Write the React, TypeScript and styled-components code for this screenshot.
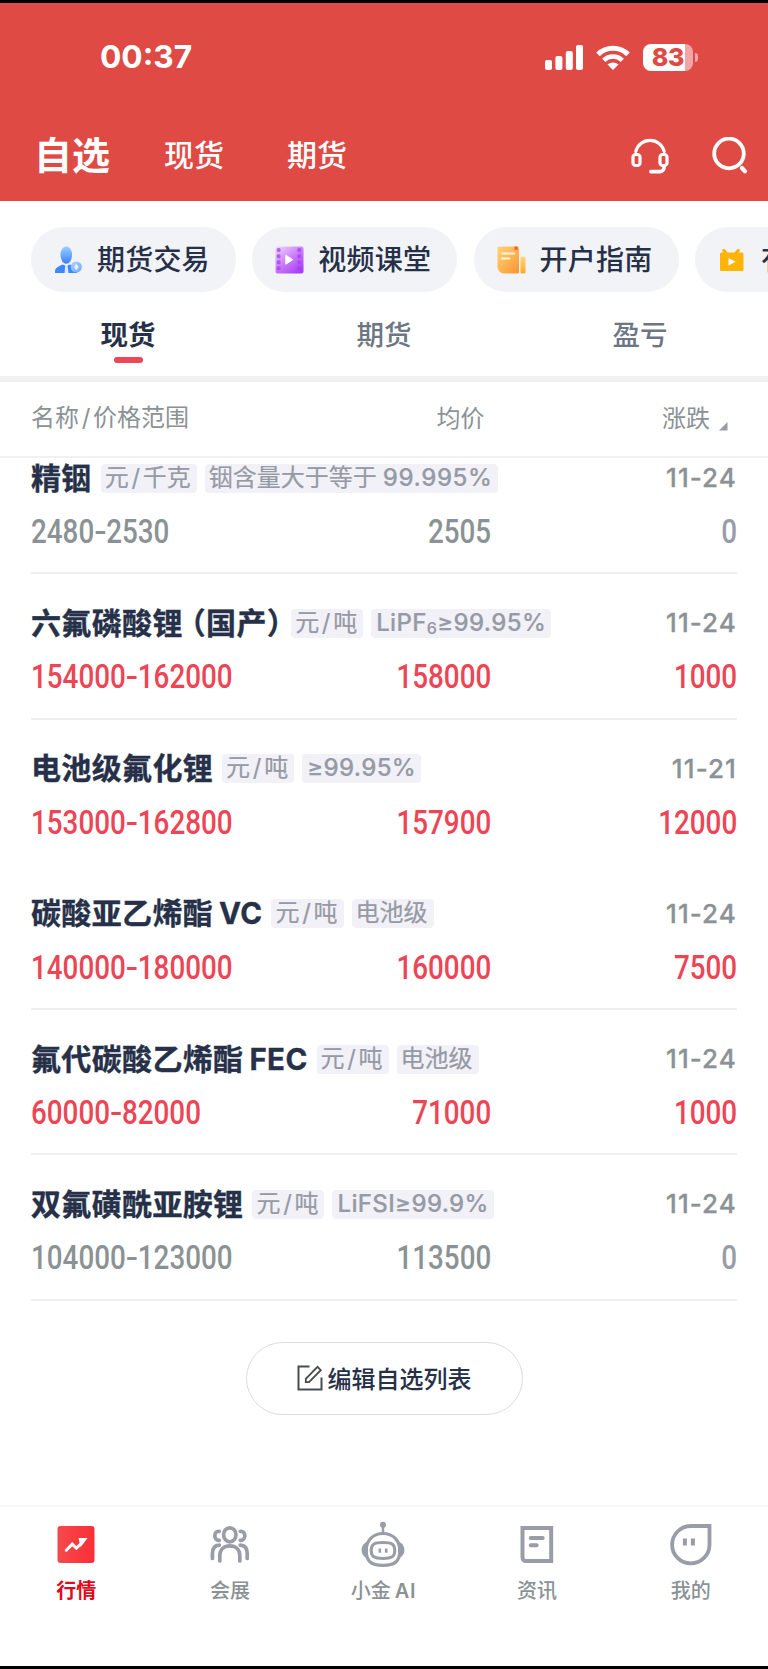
import React from "react";
import styled, { createGlobalStyle } from "styled-components";

const sans = `Inter, "Noto Sans CJK SC", sans-serif`;
const cjk = `"Noto Sans CJK SC", Inter, sans-serif`;

const GlobalStyle = createGlobalStyle`
  * { box-sizing: border-box; }
  html, body { margin: 0; padding: 0; }
  body { background: #fff; font-family: ${cjk}; overflow: hidden; }
  svg { display: block; flex: none; }
`;

const Screen = styled.div`
  width: 768px;
  height: 1669px;
  display: flex;
  flex-direction: column;
  overflow: hidden;
  background: #fff;
  border-top: 3px solid #000;
  border-bottom: 3px solid #000;
`;

const Hero = styled.header`
  height: 198px;
  flex: none;
  background: #df4a44;
  color: #fff;
`;

const StatusBar = styled.div`
  height: 108px;
  padding: 0 70px 0 100px;
  display: flex;
  align-items: center;
  justify-content: space-between;
`;

const Clock = styled.div`
  font: 700 31.7px/40px ${sans};
`;

const StatusIcons = styled.div`
  display: flex;
  align-items: center;
  gap: 13px;
`;

const Battery = styled.div`
  display: flex;
  align-items: center;
  gap: 2px;
`;

const BatteryBody = styled.div`
  width: 50px;
  height: 27px;
  border-radius: 8px;
  background: linear-gradient(90deg, #fff 0 83%, #f1a5a4 83%);
  color: #df4a44;
  font: 800 25px/27px ${sans};
  text-align: center;
  letter-spacing: -0.3px;
`;

const BatteryCap = styled.div`
  width: 3px;
  height: 9px;
  border-radius: 0 4px 4px 0;
  background: #f1a5a4;
`;

const TitleBar = styled.div`
  height: 90px;
  display: flex;
  align-items: center;
  padding: 0 20px 6px 34px;
`;

const TitleTab = styled.span<{ $active?: boolean }>`
  font-size: ${(p) => (p.$active ? 38 : 30)}px;
  font-weight: ${(p) => (p.$active ? 700 : 500)};
  line-height: 50px;
  margin-right: ${(p) => (p.$active ? 54 : 63)}px;
`;

const TitleActions = styled.div`
  margin-left: auto;
  padding-top: 4px;
  display: flex;
  gap: 43px;
`;

const ChipRow = styled.div`
  flex: none;
  display: flex;
  gap: 16.3px;
  padding: 26px 0 0 31px;
  height: 91px;
  width: 1000px;
`;

const Chip = styled.div`
  width: 205px;
  height: 65px;
  flex: none;
  display: flex;
  align-items: center;
  gap: 14px;
  padding-left: 22px;
  border-radius: 33px;
  background: #f2f3f7;
  color: #263149;
  font-weight: 500;
  font-size: 28px;
  line-height: 40px;
  letter-spacing: 0.2px;
  white-space: nowrap;
`;

const ChipLabel = styled.span`
  padding-bottom: 3px;
`;

const Tabs = styled.nav`
  flex: none;
  height: 90px;
  border-bottom: 6px solid #f1f1f1;
  display: grid;
  grid-template-columns: repeat(3, 1fr);
`;

const Tab = styled.div<{ $active?: boolean }>`
  display: flex;
  flex-direction: column;
  align-items: center;
  padding-top: 21px;
  font-size: 27.5px;
  line-height: 40px;
  font-weight: ${(p) => (p.$active ? 700 : 500)};
  color: ${(p) => (p.$active ? "#263149" : "#6e7683")};
  &::after {
    content: "";
    width: 29px;
    height: 6px;
    margin-top: 4px;
    border-radius: 3px;
    background: ${(p) => (p.$active ? "#ee4558" : "transparent")};
  }
`;

const ColumnHeads = styled.div`
  flex: none;
  height: 76px;
  border-bottom: 2px solid #f1f1f1;
  padding: 0 40px 5px 31px;
  display: grid;
  grid-template-columns: 405.5px 120px 1fr;
  align-items: center;
  color: #8b9295;
  font-size: 24px;
  line-height: 34px;
`;

const HeadCell = styled.div<{ $end?: boolean }>`
  display: flex;
  justify-content: ${(p) => (p.$end ? "flex-end" : "flex-start")};
  align-items: flex-end;
  gap: 9px;
`;

const SortMark = styled.svg`
  margin-bottom: 3px;
`;

const SlashMark = styled.span`
  margin: 0 2.7px;
  font-family: Inter, sans-serif;
`;

const List = styled.main`
  flex: none;
  padding: 0 31px;
`;

const Item = styled.section<{ $line: boolean; $first?: boolean }>`
  height: ${(p) => (p.$first ? 116.3 : 145.3)}px;
  padding-top: ${(p) => (p.$first ? 1 : 30)}px;
  border-bottom: 2px solid ${(p) => (p.$line ? "#f0f0f2" : "transparent")};
`;

const ItemTop = styled.div`
  display: flex;
  align-items: center;
  height: 38px;
  white-space: nowrap;
`;

const Name = styled.h3`
  margin: 0 9px 0 0;
  padding-bottom: 5px;
  font: 700 30px/38px ${cjk};
  letter-spacing: 0.35px;
  -webkit-text-stroke: 0.35px #263149;
  color: #263149;
`;

const NameLatin = styled.span`
  font-family: Inter, sans-serif;
  font-size: 29.5px;
  line-height: 0;
  margin-left: 6px;
`;

const OpenParen = styled.span`
  margin-left: 8px;
  font-feature-settings: "halt" 1;
`;

const CloseParen = styled.span`
  font-feature-settings: "halt" 1;
`;

const Tag = styled.span`
  height: 29px;
  padding: 0 5px;
  margin-right: 8px;
  border-radius: 4px;
  background: #f2f1f8;
  color: #969aa5;
  font: 500 24px/28px ${sans};
  letter-spacing: 0.35px;
  -webkit-text-stroke: 0.2px #969aa5;
`;

const CjkText = styled.span`
  font-weight: 400;
  font-size: 24px;
  letter-spacing: 0;
  position: relative;
  left: -1px;
`;

const NarrowGap = styled.span`
  margin-left: 5px;
  letter-spacing: 0.6px;
`;

const Sub = styled.span`
  display: inline-block;
  font-size: 16px;
  line-height: 16px;
  transform: translateY(3px);
`;

const ItemDate = styled.time`
  margin-left: auto;
  font: 500 26px/38px ${sans};
  letter-spacing: 1.1px;
  -webkit-text-stroke: 0.3px #8b9295;
  color: #8b9295;
`;

const Figures = styled.div<{ $up: boolean }>`
  display: grid;
  grid-template-columns: 229px 231px 1fr;
  margin-top: 16px;
  font: 500 33.5px/38px Roboto, sans-serif;
  white-space: nowrap;
  color: ${(p) => (p.$up ? "#ec4555" : "#8b9295")};
`;

const Figure = styled.span<{ $end?: boolean; $muted?: boolean }>`
  justify-self: ${(p) => (p.$end ? "end" : "start")};
  transform: scaleX(0.83);
  transform-origin: ${(p) => (p.$end ? "right" : "left")} center;
  color: ${(p) => (p.$muted ? "#989ca8" : "inherit")};
`;

const Dash = styled.span`
  display: inline-block;
  margin: 0 1.5px;
  transform: scaleX(1.3);
`;

const EditButton = styled.button`
  flex: none;
  align-self: center;
  width: 277px;
  height: 73px;
  margin: 41px 0 0;
  padding: 0 0 1px;
  border: 1.5px solid #dcdcde;
  border-radius: 37px;
  background: #fff;
  color: #263149;
  font: 500 24px/34px ${cjk};
  display: flex;
  align-items: center;
  justify-content: center;
  gap: 5px;
`;

const BottomNav = styled.nav`
  margin-top: auto;
  height: 161px;
  flex: none;
  border-top: 2px solid #f7f7f8;
  display: grid;
  grid-template-columns: repeat(5, 1fr);
`;

const NavItem = styled.div<{ $active?: boolean }>`
  display: flex;
  flex-direction: column;
  align-items: center;
  padding: 13px 1px 0 0;
  color: ${(p) => (p.$active ? "#df0a20" : "#8b9295")};
  font-size: 20px;
  font-weight: ${(p) => (p.$active ? 700 : 500)};
  line-height: 30px;
  gap: 5px;
  white-space: nowrap;
`;

const NavLatin = styled.span`
  font-family: Inter, sans-serif;
  font-weight: 600;
  letter-spacing: 0.8px;
  line-height: 0;
  margin-left: 4px;
`;

const SignalIcon = () => (
  <svg width="38" height="25" viewBox="0 0 38 25" fill="#fff">
    <rect x="0" y="15" width="7" height="10" rx="2" />
    <rect x="10.4" y="11" width="7" height="14" rx="2" />
    <rect x="20.8" y="6" width="7" height="19" rx="2" />
    <rect x="31" y="0" width="7" height="25" rx="2" />
  </svg>
);

const WifiIcon = () => (
  <svg width="34" height="25" viewBox="0 0 34 25" fill="none" stroke="#fff" strokeWidth="5">
    <path d="M2 9.4a21.5 21.5 0 0 1 30 0" />
    <path d="M7.7 15.3a13.4 13.4 0 0 1 18.6 0" strokeWidth="4.6" />
    <path d="M11.5 19.6a8 8 0 0 1 11 0L17 25z" fill="#fff" stroke="none" />
  </svg>
);

const HeadsetIcon = () => (
  <svg width="38" height="37" viewBox="0 0 38 37" fill="none" stroke="#fff" strokeWidth="3.2" strokeLinecap="round" strokeLinejoin="round">
    <path d="M4.8 14.5a14.6 14.6 0 0 1 28.4 0" />
    <rect x="2" y="17.5" width="7" height="11" rx="2.6" />
    <rect x="29" y="17.5" width="7" height="11" rx="2.6" />
    <path d="M33 29v1.8a4 4 0 0 1-4 3.8h-9.2" strokeWidth="3.6" />
  </svg>
);

const SearchIcon = () => (
  <svg width="36" height="37" viewBox="0 0 36 37" fill="none" stroke="#fff" strokeLinecap="round">
    <circle cx="17" cy="16.5" r="14.8" strokeWidth="3.8" />
    <path d="M30 31l3 3.3" strokeWidth="4.2" />
  </svg>
);

const TraderIcon = () => (
  <svg width="30" height="30" viewBox="0 0 30 30">
    <defs>
      <linearGradient id="trader" x1="0" y1="0" x2="0" y2="1">
        <stop offset="0" stopColor="#9bd2ff" />
        <stop offset="1" stopColor="#3a80fb" />
      </linearGradient>
      <linearGradient id="coin" x1="0" y1="0" x2="1" y2="1">
        <stop offset="0" stopColor="#a9d3fd" />
        <stop offset="1" stopColor="#6ba7fa" />
      </linearGradient>
    </defs>
    <ellipse cx="13.3" cy="10" rx="5.8" ry="8.7" fill="url(#trader)" />
    <path d="M2 28v-1.5c0-3.500 3-5 7.500-7l3.800 1.500 3.700-1.500C21 21.500 24 23 24 26.500V28z" fill="#3f86fb" />
    <path d="M12.3 20h2.200l1 8h-4z" fill="#d7e8ff" />
    <circle cx="23.3" cy="22" r="5.6" fill="url(#coin)" opacity=".95" />
    <path d="M23.3 18.500l2.400 3.500-2.400 3.500-2.400-3.500z" fill="#dff0ff" />
  </svg>
);

const FilmIcon = () => (
  <svg width="30" height="30" viewBox="0 0 30 30">
    <defs>
      <linearGradient id="film" x1="0" y1="0" x2=".8" y2="1">
        <stop offset="0" stopColor="#f0dcff" />
        <stop offset=".5" stopColor="#cd80fa" />
        <stop offset="1" stopColor="#a83ef7" />
      </linearGradient>
    </defs>
    <rect x="1.5" y="1.5" width="28" height="27" rx="2" fill="url(#film)" />
    <g fill="#a441ee" opacity=".75">
      {[3, 9.2, 15.2, 21.2].map((y) => (
        <React.Fragment key={y}>
          <rect x="2.8" y={y} width="3.8" height="4" rx="1.5" />
          <rect x="23.3" y={y} width="3.8" height="4" rx="1.5" />
        </React.Fragment>
      ))}
    </g>
    <path d="M11.8 10.2v9l7-4.500z" fill="#fff" stroke="#fff" strokeLinejoin="round" />
  </svg>
);

const GuideIcon = () => (
  <svg width="30" height="30" viewBox="0 0 30 30">
    <defs>
      <linearGradient id="guide" x1="0" y1="0" x2="1" y2="1">
        <stop offset="0" stopColor="#ffd476" />
        <stop offset="1" stopColor="#fb9430" />
      </linearGradient>
      <linearGradient id="guideSide" x1="0" y1="0" x2="0" y2="1">
        <stop offset="0" stopColor="#ffd780" />
        <stop offset="1" stopColor="#ffa81f" />
      </linearGradient>
    </defs>
    <path d="M3 1.500h18.500a1.500 1.500 0 0 1 1.500 1.500v24a1.500 1.500 0 0 1-1.500 1.500H8a6.500 6.500 0 0 1-6.500-6.500V3A1.500 1.500 0 0 1 3 1.500z" fill="url(#guide)" />
    <path d="M18.5 1.500h3v4l-1.500-1-1.500 1z" fill="#f3622c" />
    <rect x="24.5" y="11.5" width="5" height="17" rx="1.5" fill="url(#guideSide)" />
    <path d="M6.2 8.500h12M6.200 13.500h7" stroke="#fff5dc" strokeWidth="2.2" strokeLinecap="round" />
  </svg>
);

const TvIcon = () => (
  <svg width="30" height="30" viewBox="0 0 30 30">
    <path d="M9.5 9L6.800 5.500M18.500 9l2.700-3.500" stroke="#ffb100" strokeWidth="3.2" strokeLinecap="round" />
    <rect x="3" y="7.5" width="23.5" height="18.5" rx="1.5" fill="#ffb409" />
    <path d="M11.5 13v7.500l7-3.800z" fill="#fff" />
  </svg>
);

const EditIcon = () => (
  <svg width="26" height="26" viewBox="0 0 26 26" fill="none" stroke="#4a4c55" strokeWidth="2">
    <path d="M12.5 1.500H1.500v23h23V12.500" />
    <path d="M8.8 13.800L20.500 1.900l3.300 3.300L12 17.100H8.800z" stroke="#444b48" strokeWidth="1.8" />
  </svg>
);

const MarketIcon = () => (
  <svg width="46" height="50" viewBox="0 0 46 50">
    <defs>
      <linearGradient id="market" x1="0" y1="0" x2="1" y2="0">
        <stop offset="0" stopColor="#f5494c" />
        <stop offset="1" stopColor="#fa2f37" />
      </linearGradient>
    </defs>
    <rect x="4.5" y="6" width="37" height="37" rx="3" fill="url(#market)" />
    <path d="M13.3 30.200l5.900-6 4.200 4 6-6" fill="none" stroke="#fff" strokeWidth="3" strokeLinecap="round" />
    <path d="M25.5 18h9.100l-7 9z" fill="#fff" />
  </svg>
);

const PeopleIcon = () => (
  <svg width="46" height="50" viewBox="0 0 46 50" fill="none" stroke="#999da8" strokeWidth="3.7" strokeLinecap="round">
    <ellipse cx="22.8" cy="14.8" rx="6.2" ry="7" />
    <path d="M12.8 41V35.500c0-5.800 4-9.700 10-9.700s10 3.900 10 9.700V41" />
    <path d="M12.3 11.300c-6-.8-6 9.700 0 9M33.300 11.300c6-.8 6 9.700 0 9" />
    <path d="M5.4 38.500v-5c0-4.800 1.900-8 7-8.300M40.200 38.500v-5c0-4.800-1.900-8-7-8.300" />
  </svg>
);

const RobotIcon = () => (
  <svg width="46" height="50" viewBox="0 0 46 50" fill="none" stroke="#999da8">
    <circle cx="23" cy="4.8" r="3" fill="#999da8" stroke="none" />
    <path d="M23 6v8" strokeWidth="2.5" />
    <path d="M8 21.500c-8.500 2-8.500 15 0 17zM38 21.500c8.500 2 8.500 15 0 17z" fill="#999da8" stroke="none" />
    <path d="M23 13.500C12 13.500 6.200 21.500 6.200 30c0 11.500 4.800 15.300 16.800 15.300S39.800 41.500 39.800 30C39.800 21.500 34 13.500 23 13.500z" strokeWidth="3.2" />
    <path d="M23 22.500c-9.300 0-11.800 1.800-11.800 8s3 8 11.800 8 11.800-1.800 11.800-8-2.500-8-11.800-8z" strokeWidth="3" />
    <path d="M19.8 28.500v4.200M26.200 28.500v4.200" strokeWidth="2.6" />
  </svg>
);

const NewsIcon = () => (
  <svg width="46" height="50" viewBox="0 0 46 50" fill="none" stroke="#999da8" strokeWidth="4">
    <path d="M8.5 8h28.700v33H12a3.500 3.500 0 0 1-3.500-3.500z" />
    <path d="M16.7 18h12M16.700 25.300h6" strokeLinecap="round" />
  </svg>
);

const ProfileIcon = () => (
  <svg width="46" height="50" viewBox="0 0 46 50" fill="none" stroke="#999da8" strokeWidth="3.8">
    <path d="M41.5 6H22.800a18.700 18.700 0 1 0 18.700 18.700z" />
    <path d="M16.9 18.500v7M24.900 18.500v7" strokeWidth="4" />
  </svg>
);

const chips = [
  { label: "期货交易", Icon: TraderIcon },
  { label: "视频课堂", Icon: FilmIcon },
  { label: "开户指南", Icon: GuideIcon },
  { label: "有色", Icon: TvIcon },
];

const perTon = (
  <CjkText>
    元<SlashMark>/</SlashMark>吨
  </CjkText>
);

interface Quote {
  id: string;
  name: React.ReactNode;
  latin?: string;
  tags: React.ReactNode[];
  date: string;
  range: [string, string];
  average: string;
  change: string;
  line: boolean;
}

const quotes: Quote[] = [
  {
    id: "indium",
    name: "精铟",
    tags: [
      <CjkText>
        元<SlashMark>/</SlashMark>千克
      </CjkText>,
      <>
        <CjkText>铟含量大于等于</CjkText>
        <NarrowGap>99.995%</NarrowGap>
      </>,
    ],
    date: "11-24",
    range: ["2480", "2530"],
    average: "2505",
    change: "0",
    line: true,
  },
  {
    id: "lipf6",
    name: (
      <>
        六氟磷酸锂<OpenParen>（</OpenParen>国产<CloseParen>）</CloseParen>
      </>
    ),
    tags: [
      perTon,
      <>
        LiPF<Sub>6</Sub>≥99.95%
      </>,
    ],
    date: "11-24",
    range: ["154000", "162000"],
    average: "158000",
    change: "1000",
    line: true,
  },
  { id: "lif", name: "电池级氟化锂", tags: [perTon, "≥99.95%"], date: "11-21", range: ["153000", "162800"], average: "157900", change: "12000", line: false },
  { id: "vc", name: "碳酸亚乙烯酯", latin: "VC", tags: [perTon, <CjkText>电池级</CjkText>], date: "11-24", range: ["140000", "180000"], average: "160000", change: "7500", line: true },
  { id: "fec", name: "氟代碳酸乙烯酯", latin: "FEC", tags: [perTon, <CjkText>电池级</CjkText>], date: "11-24", range: ["60000", "82000"], average: "71000", change: "1000", line: true },
  { id: "lifsi", name: "双氟磺酰亚胺锂", tags: [perTon, "LiFSI≥99.9%"], date: "11-24", range: ["104000", "123000"], average: "113500", change: "0", line: true },
];

const navItems = [
  { label: "行情", Icon: MarketIcon },
  { label: "会展", Icon: PeopleIcon },
  { label: "小金", latin: "AI", Icon: RobotIcon },
  { label: "资讯", Icon: NewsIcon },
  { label: "我的", Icon: ProfileIcon },
];

export default function App() {
  return (
    <>
      <GlobalStyle />
      <Screen>
        <Hero>
          <StatusBar>
            <Clock>00:37</Clock>
            <StatusIcons>
              <SignalIcon />
              <WifiIcon />
              <Battery>
                <BatteryBody>83</BatteryBody>
                <BatteryCap />
              </Battery>
            </StatusIcons>
          </StatusBar>
          <TitleBar>
            <TitleTab $active>自选</TitleTab>
            <TitleTab>现货</TitleTab>
            <TitleTab>期货</TitleTab>
            <TitleActions>
              <HeadsetIcon />
              <SearchIcon />
            </TitleActions>
          </TitleBar>
        </Hero>
        <ChipRow>
          {chips.map(({ label, Icon }) => (
            <Chip key={label}>
              <Icon />
              <ChipLabel>{label}</ChipLabel>
            </Chip>
          ))}
        </ChipRow>
        <Tabs>
          <Tab $active>现货</Tab>
          <Tab>期货</Tab>
          <Tab>盈亏</Tab>
        </Tabs>
        <ColumnHeads>
          <HeadCell>
            <span>
              名称<SlashMark>/</SlashMark>价格范围
            </span>
          </HeadCell>
          <HeadCell>均价</HeadCell>
          <HeadCell $end>
            涨跌
            <SortMark width="9" height="9" viewBox="0 0 9 9">
              <path d="M8.5 0v8.500H0z" fill="#989ca8" />
            </SortMark>
          </HeadCell>
        </ColumnHeads>
        <List>
          {quotes.map((q, i) => (
            <Item key={q.id} $line={q.line} $first={i === 0}>
              <ItemTop>
                <Name>
                  {q.name}
                  {q.latin && <NameLatin>{q.latin}</NameLatin>}
                </Name>
                {q.tags.map((t, k) => (
                  <Tag key={k}>{t}</Tag>
                ))}
                <ItemDate>{q.date}</ItemDate>
              </ItemTop>
              <Figures $up={q.change !== "0"}>
                <Figure>
                  {q.range[0]}
                  <Dash>-</Dash>
                  {q.range[1]}
                </Figure>
                <Figure $end>{q.average}</Figure>
                <Figure $end $muted={q.change === "0"}>
                  {q.change}
                </Figure>
              </Figures>
            </Item>
          ))}
        </List>
        <EditButton>
          <EditIcon />
          编辑自选列表
        </EditButton>
        <BottomNav>
          {navItems.map(({ label, latin, Icon }, i) => (
            <NavItem key={label} $active={i === 0}>
              <Icon />
              <span>
                {label}
                {latin && <NavLatin>{latin}</NavLatin>}
              </span>
            </NavItem>
          ))}
        </BottomNav>
      </Screen>
    </>
  );
}
